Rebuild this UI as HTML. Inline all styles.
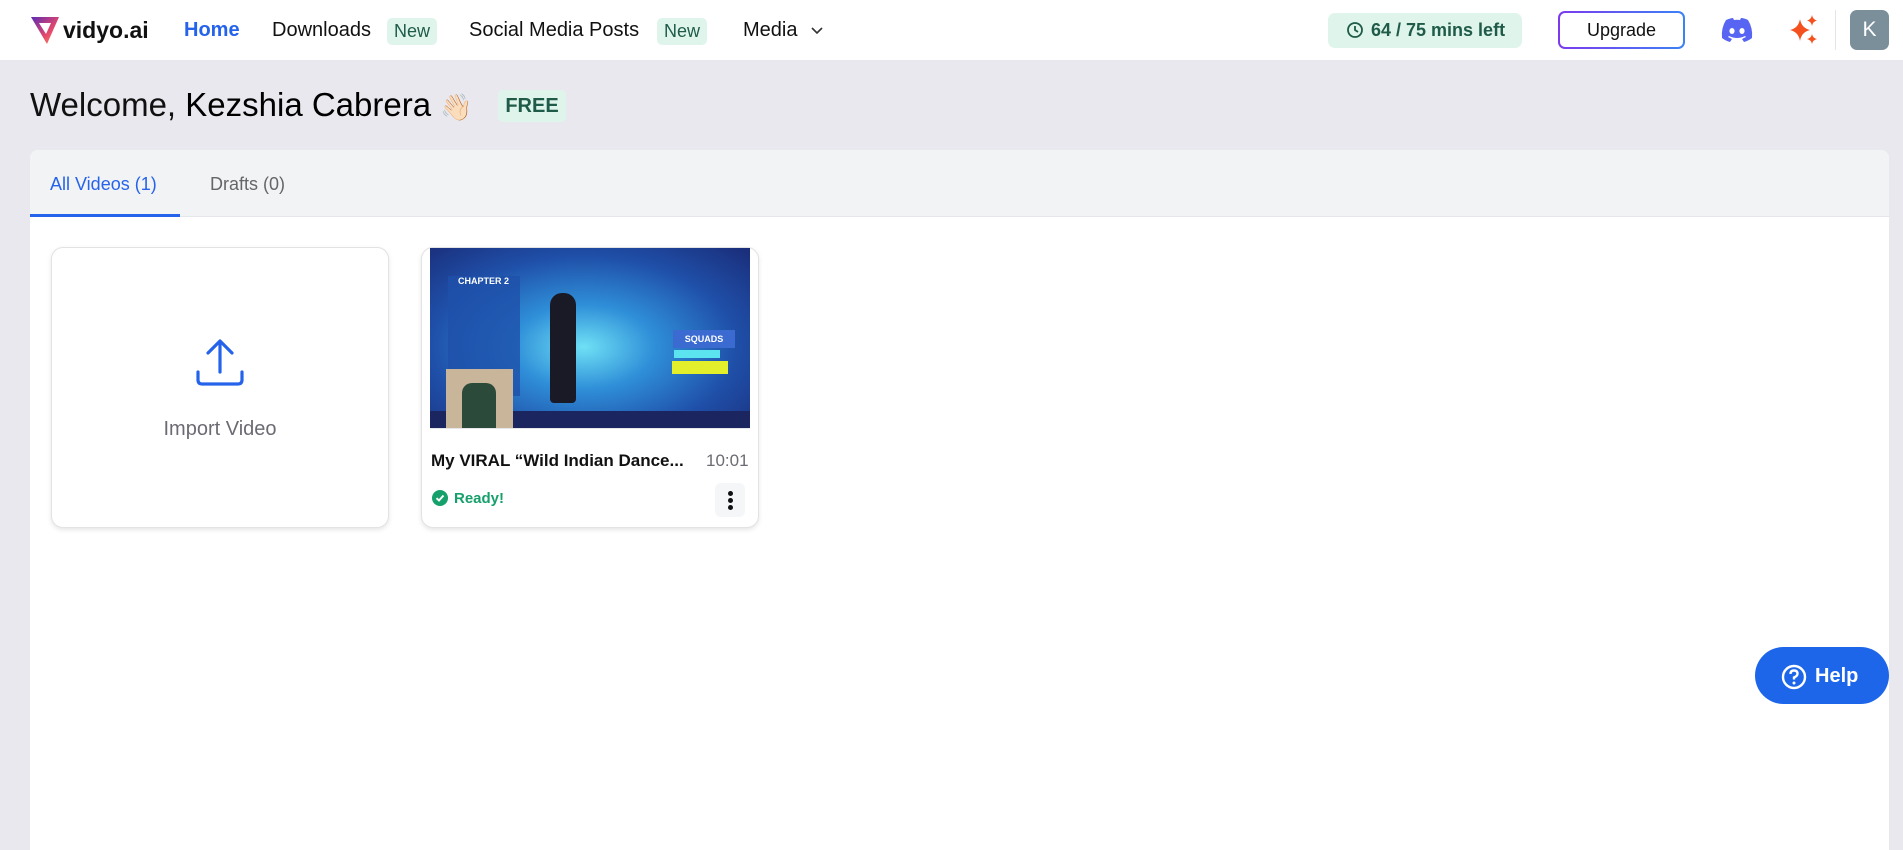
<!DOCTYPE html>
<html><head><meta charset="utf-8"><style>
*{box-sizing:border-box;margin:0;padding:0}
body{width:1903px;height:814px;overflow:hidden;background:#e8e8ee;font-family:"Liberation Sans",sans-serif;position:relative}
.abs{position:absolute}
.nav{left:0;top:0;width:1903px;height:60px;background:#fff}
.nl{font-size:20px;color:#111;top:19px}
.badge{background:#dff5ec;color:#1f5b48;font-size:18px;border-radius:5px;padding:3px 7px}
</style></head><body>
<div class="abs nav"></div>
<svg class="abs" style="left:30px;top:15px" width="30" height="30" viewBox="0 0 30 30"><defs><linearGradient id="lg" x1="0" y1="0" x2="1" y2="1"><stop offset="0" stop-color="#5b2bb5"/><stop offset="0.6" stop-color="#e5476b"/><stop offset="1" stop-color="#f7955a"/></linearGradient></defs><path d="M1 2 H29 L17 29 Z" fill="url(#lg)"/><path d="M9 8 H21 L16 19 Z" fill="#fff"/></svg>
<div class="abs" style="left:63px;top:17px;font-size:23px;font-weight:bold;color:#111">vidyo.ai</div>
<div class="abs nl" style="left:184px;color:#2563eb;font-weight:bold">Home</div>
<div class="abs nl" style="left:272px">Downloads</div>
<div class="abs badge" style="left:387px;top:18px">New</div>
<div class="abs nl" style="left:469px">Social Media Posts</div>
<div class="abs badge" style="left:657px;top:18px">New</div>
<div class="abs nl" style="left:743px">Media</div>
<svg class="abs" style="left:810px;top:26px" width="14" height="10"><path d="M2 2 L7 7 L12 2" stroke="#333" stroke-width="1.6" fill="none"/></svg>
<div class="abs" style="left:1328px;top:13px;width:194px;height:35px;background:#dff5ec;border-radius:7px"></div>
<svg class="abs" style="left:1346px;top:21px" width="18" height="18" viewBox="0 0 18 18"><circle cx="9" cy="9" r="7" stroke="#1f5b48" stroke-width="1.8" fill="none"/><path d="M9 5 V9 L12 11" stroke="#1f5b48" stroke-width="1.8" fill="none"/></svg>
<div class="abs" style="left:1371px;top:20px;font-size:18px;font-weight:bold;color:#1f5b48">64 / 75 mins left</div>
<div class="abs" style="left:1558px;top:11px;width:127px;height:38px;border-radius:7px;padding:2px;background:linear-gradient(90deg,#7c3aed,#3b82f6)"><div style="width:100%;height:100%;background:#fff;border-radius:5px;text-align:center;line-height:34px;font-size:18px;color:#111">Upgrade</div></div>
<svg class="abs" style="left:1720px;top:17px" width="34" height="26" viewBox="0 0 34 26"><path d="M6 3 Q11 1 13 1 L14 3 Q17 2.5 20 3 L21 1 Q24 1 28 3 Q33 11 32 21 Q28 24 24 25 L22 22 Q24 21 26 20 L25 19 Q17 23 9 19 L8 20 Q10 21 12 22 L10 25 Q6 24 2 21 Q1 11 6 3Z" fill="#5865f2"/><ellipse cx="12" cy="14" rx="2.6" ry="3" fill="#fff"/><ellipse cx="22" cy="14" rx="2.6" ry="3" fill="#fff"/></svg>
<svg class="abs" style="left:1789px;top:14px" width="30" height="32" viewBox="0 0 30 32"><path d="M11 5 Q12.5 14 21 16 Q12.5 18 11 27 Q9.5 18 1 16 Q9.5 14 11 5Z" fill="#f4511e"/><path d="M23 1 Q23.7 5.5 28 6.5 Q23.7 7.5 23 12 Q22.3 7.5 18 6.5 Q22.3 5.5 23 1Z" fill="#f4511e"/><path d="M23 20 Q23.7 24 28 25 Q23.7 26 23 30 Q22.3 26 18 25 Q22.3 24 23 20Z" fill="#f4511e"/></svg>
<div class="abs" style="left:1835px;top:10px;width:1px;height:40px;background:#e5e5e5"></div>
<div class="abs" style="left:1850px;top:10px;width:39px;height:40px;border-radius:7px;background:#7b8f9b;color:#fff;font-size:21px;text-align:center;line-height:40px">K</div>

<div class="abs" style="left:30px;top:86px;font-size:33px;color:#111;white-space:nowrap">Welcome, <span style="color:#000">Kezshia Cabrera</span> <span style="font-size:26px">👋🏻</span></div>
<div class="abs" style="left:498px;top:90px;width:68px;height:32px;background:#dff5ec;border-radius:5px;color:#1f5b48;font-size:20px;font-weight:bold;text-align:center;line-height:32px">FREE</div>

<div class="abs" style="left:30px;top:150px;width:1859px;height:700px;background:#fff;border-radius:8px 8px 0 0;overflow:hidden">
<div style="height:67px;background:#f2f3f5;border-bottom:1px solid #e5e7eb;position:relative">
<div class="abs" style="left:20px;top:24px;font-size:18px;color:#2563eb">All Videos (1)</div>
<div class="abs" style="left:180px;top:24px;font-size:18px;color:#666">Drafts (0)</div>
<div class="abs" style="left:0;top:64px;width:150px;height:3px;background:#2563eb"></div>
</div></div>

<div class="abs" style="left:51px;top:247px;width:338px;height:281px;background:#fff;border:1px solid #e3e3e3;border-radius:12px;box-shadow:0 2px 5px rgba(0,0,0,.1)"></div>
<svg class="abs" style="left:194px;top:337px" width="52" height="52" viewBox="0 0 52 52"><path d="M26 5 V35 M14 16 L26 4 L38 16 M4 35 V43 Q4 47 8 47 H44 Q48 47 48 43 V35" stroke="#2563eb" stroke-width="3.2" fill="none" stroke-linecap="round" stroke-linejoin="round"/></svg>
<div class="abs" style="left:51px;top:418px;width:338px;text-align:center;font-size:20px;color:#6b6b73">Import Video</div>

<div class="abs" style="left:421px;top:247px;width:338px;height:281px;background:#fff;border:1px solid #e3e3e3;border-radius:12px;box-shadow:0 2px 5px rgba(0,0,0,.1)"></div>
<div class="abs" style="left:430px;top:248px;width:320px;height:180px;background:radial-gradient(ellipse at 48% 55%,#6fe0f5 0%,#2f8fd8 30%,#1f4fa8 65%,#1a2c78 100%);overflow:hidden">
<div class="abs" style="left:18px;top:28px;width:72px;height:120px;background:rgba(30,80,170,.8)"></div>
<div class="abs" style="left:28px;top:28px;font-size:9px;font-weight:bold;color:#fff">CHAPTER 2</div>
<div class="abs" style="left:120px;top:45px;width:26px;height:110px;background:#1a1a26;border-radius:12px 12px 4px 4px"></div>
<div class="abs" style="left:243px;top:82px;width:62px;height:18px;background:#3b6ad0;color:#fff;font-size:9px;font-weight:bold;text-align:center;line-height:18px">SQUADS</div>
<div class="abs" style="left:244px;top:102px;width:46px;height:8px;background:#5be3f0"></div>
<div class="abs" style="left:242px;top:113px;width:56px;height:13px;background:#e3ef2a"></div>
<div class="abs" style="left:0;top:163px;width:320px;height:17px;background:#1b2660"></div>
<div class="abs" style="left:16px;top:121px;width:67px;height:59px;background:#c9b59a"></div>
<div class="abs" style="left:32px;top:135px;width:34px;height:45px;background:#2c4a3a;border-radius:10px 10px 0 0"></div>
</div>
<div class="abs" style="left:430px;top:428px;width:320px;height:1px;background:#e5e7eb"></div>
<div class="abs" style="left:431px;top:451px;font-size:17px;font-weight:bold;color:#111">My VIRAL “Wild Indian Dance...</div>
<div class="abs" style="left:706px;top:451px;font-size:17px;color:#6b6b73">10:01</div>
<svg class="abs" style="left:432px;top:490px" width="16" height="16" viewBox="0 0 16 16"><circle cx="8" cy="8" r="8" fill="#16a06b"/><path d="M4.5 8.2 L7 10.5 L11.5 5.5" stroke="#fff" stroke-width="2" fill="none"/></svg>
<div class="abs" style="left:454px;top:490px;font-size:15px;font-weight:bold;color:#16a06b">Ready!</div>
<div class="abs" style="left:715px;top:483px;width:30px;height:34px;background:#f5f6f8;border-radius:6px"></div>
<div class="abs" style="left:728px;top:491px;width:5px;height:5px;border-radius:50%;background:#111"></div>
<div class="abs" style="left:728px;top:498px;width:5px;height:5px;border-radius:50%;background:#111"></div>
<div class="abs" style="left:728px;top:505px;width:5px;height:5px;border-radius:50%;background:#111"></div>

<div class="abs" style="left:1755px;top:647px;width:134px;height:57px;background:#1d66ea;border-radius:29px"></div>
<svg class="abs" style="left:1781px;top:664px" width="26" height="26" viewBox="0 0 26 26"><circle cx="13" cy="13" r="11" stroke="#fff" stroke-width="2.4" fill="none"/><path d="M9.5 10 Q9.5 6.5 13 6.5 Q16.5 6.5 16.5 9.8 Q16.5 12 13 13.5 V15.5" stroke="#fff" stroke-width="2.4" fill="none"/><circle cx="13" cy="19" r="1.5" fill="#fff"/></svg>
<div class="abs" style="left:1815px;top:665px;font-size:20px;font-weight:bold;color:#fff">Help</div>
</body></html>
